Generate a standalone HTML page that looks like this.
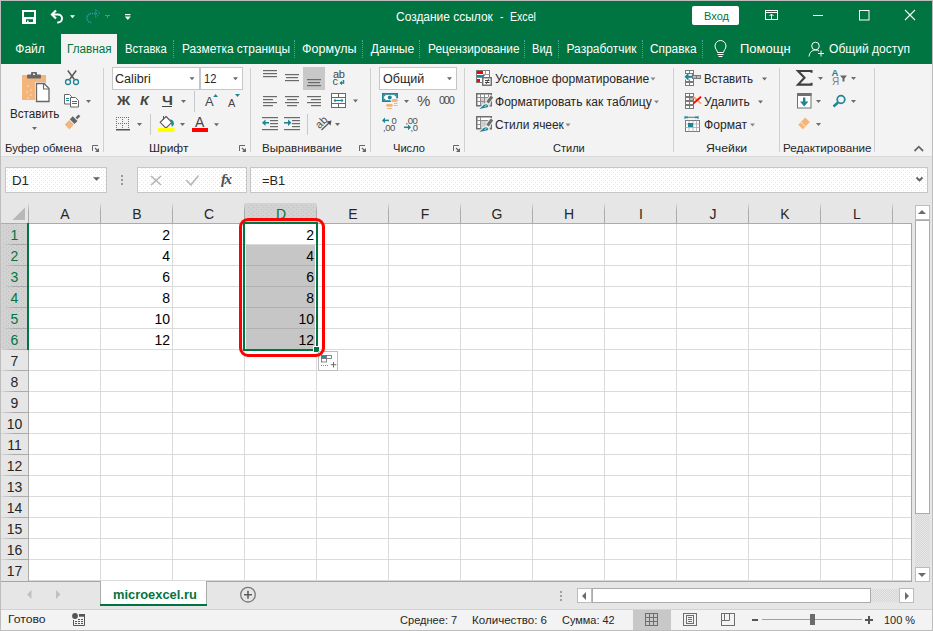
<!DOCTYPE html>
<html><head><meta charset="utf-8">
<style>
*{margin:0;padding:0;box-sizing:border-box}
html,body{width:933px;height:631px;overflow:hidden;background:#e6e6e6}
body{position:relative;font-family:"Liberation Sans",sans-serif;font-size:12px;color:#262626}
.a{position:absolute}
.t{position:absolute;white-space:nowrap;font-size:12px;line-height:16px;font-family:"Liberation Sans",sans-serif}
.w{color:#fff}
svg{position:absolute;overflow:visible}
.dd{position:absolute;width:0;height:0;border-left:3px solid transparent;border-right:3px solid transparent;border-top:3px solid #6b6b6b}
.gsep{position:absolute;top:68px;width:1px;height:84px;background:#c8c8c8}
.glab{position:absolute;top:140px;white-space:nowrap;font-size:12px;line-height:16px;color:#262626}
.tsep{position:absolute;top:40px;height:18px;width:1px;border-left:1px dotted #4f9cc0}
.vl{position:absolute;top:224px;width:1px;height:357px;background:#dadada}
.hl{position:absolute;left:29px;width:882px;height:1px;background:#dadada}
.rh{position:absolute;left:1px;width:27px;height:20px;text-align:center;font-size:14px;line-height:18px;color:#262626}
.ch{position:absolute;top:205px;width:74px;text-align:center;font-size:14px;line-height:18px;color:#262626}
.cv{position:absolute;width:69px;text-align:right;font-size:14px;line-height:18px;color:#000}
</style>

<style id="fit">
#tx1{left:396.20px !important;transform:scaleX(0.9969);transform-origin:0 0}
#tx2{left:499.70px !important;transform:scaleX(0.8500);transform-origin:0 0}
#tx3{left:509.72px !important;transform:scaleX(0.8821);transform-origin:0 0}
#tx4{left:15.30px !important;transform:scaleX(1.0000);transform-origin:0 0}
#tx5{left:67.02px !important;transform:scaleX(0.9795);transform-origin:0 0}
#tx6{left:125.26px !important;transform:scaleX(0.9364);transform-origin:0 0}
#tx8{left:181.51px !important;transform:scaleX(0.9935);transform-origin:0 0}
#tx10{left:302.06px !important;transform:scaleX(1.0431);transform-origin:0 0}
#tx12{left:370.80px !important;transform:scaleX(1.0000);transform-origin:0 0}
#tx14{left:427.71px !important;transform:scaleX(0.9879);transform-origin:0 0}
#tx16{left:532.48px !important;transform:scaleX(0.9238);transform-origin:0 0}
#tx18{left:566.50px !important;transform:scaleX(1.0000);transform-origin:0 0}
#tx20{left:650.11px !important;transform:scaleX(0.9891);transform-origin:0 0}
#tx22{left:740.22px !important;transform:scaleX(1.0822);transform-origin:0 0}
#tx23{left:829.20px !important;transform:scaleX(1.0050);transform-origin:0 0}
#tx24{left:703.74px !important;transform:scaleX(0.9600);transform-origin:0 0}
#tx25{left:10.13px !important;transform:scaleX(0.9714);transform-origin:0 0}
#tx26{left:5.21px !important;transform:scaleX(0.9857);transform-origin:0 0}
#tx27{left:115.45px !important;transform:scaleX(1.0500);transform-origin:0 0}
#tx28{left:203.67px !important;transform:scaleX(0.9333);transform-origin:0 0}
#tx35{left:149.46px !important;transform:scaleX(1.0432);transform-origin:0 0}
#tx39{left:262.19px !important;transform:scaleX(1.0103);transform-origin:0 0}
#tx40{left:382.80px !important;transform:scaleX(1.0462);transform-origin:0 0}
#tx47{left:393.33px !important;transform:scaleX(0.9656);transform-origin:0 0}
#tx48{left:494.79px !important;transform:scaleX(1.0099);transform-origin:0 0}
#tx49{left:495.20px !important;transform:scaleX(1.0039);transform-origin:0 0}
#tx50{left:495.21px !important;transform:scaleX(0.9941);transform-origin:0 0}
#tx51{left:553.44px !important;transform:scaleX(0.9594);transform-origin:0 0}
#tx52{left:704.44px !important;transform:scaleX(0.9633);transform-origin:0 0}
#tx53{left:703.60px !important;transform:scaleX(0.9977);transform-origin:0 0}
#tx54{left:704.39px !important;transform:scaleX(1.0095);transform-origin:0 0}
#tx55{left:705.73px !important;transform:scaleX(1.0676);transform-origin:0 0}
#tx58{left:783.39px !important;transform:scaleX(1.0105);transform-origin:0 0}
#tx59{left:12.28px !important;transform:scaleX(1.0200);transform-origin:0 0}
#tx61{left:262.11px !important;transform:scaleX(0.9864);transform-origin:0 0}
#tx62{left:112.55px !important;transform:scaleX(0.9547);transform-origin:0 0}
#tx63{left:8.14px !important;transform:scaleX(1.0588);transform-origin:0 0}
#tx64{left:399.54px !important;transform:scaleX(0.9621);transform-origin:0 0}
#tx65{left:472.39px !important;transform:scaleX(1.0068);transform-origin:0 0}
#tx66{left:562.45px !important;transform:scaleX(0.9519);transform-origin:0 0}
#tx67{left:884.05px !important;transform:scaleX(0.9548);transform-origin:0 0}
</style>
</head><body>
<svg width="0" height="0" style="position:absolute"><defs>
<pattern id="dots" width="4" height="4" patternUnits="userSpaceOnUse"><rect x="1" y="0" width="1" height="1" fill="#e6e6e6"/><rect x="3" y="2" width="1" height="1" fill="#e6e6e6"/></pattern>
<pattern id="hdots" width="5" height="4" patternUnits="userSpaceOnUse"><rect x="1" y="1" width="1" height="1" fill="#c2c2c2"/><rect x="3" y="3" width="1" height="1" fill="#c2c2c2"/></pattern>
</defs></svg>
<!-- window border -->
<div class="a" style="left:0;top:0;width:933px;height:631px;border:1px solid #bdbdbd;z-index:50;pointer-events:none"></div>

<!-- title bar + tabs -->
<div class="a" style="left:1px;top:1px;width:931px;height:63px;background:#017541"></div>
<div id="tx1" class="t w" style="left:396px;top:9px">Создание ссылок</div>
<div id="tx2" class="t w" style="left:498px;top:9px">-</div>
<div id="tx3" class="t w" style="left:509px;top:9px">Excel</div>

<!-- tabs -->
<div class="a" style="left:61px;top:34px;width:56px;height:30px;background:#f3f3f3"></div>
<div id="tx4" class="t w" style="left:15px;top:41px">Файл</div>
<div id="tx5" class="t" style="left:67px;top:41px;color:#017541">Главная</div>
<div id="tx6" class="t w" style="left:125px;top:41px">Вставка</div>
<div id="tx7" class="tsep" style="left:173px"></div>
<div id="tx8" class="t w" style="left:181px;top:41px">Разметка страницы</div>
<div id="tx9" class="tsep" style="left:294px"></div>
<div id="tx10" class="t w" style="left:302px;top:41px">Формулы</div>
<div id="tx11" class="tsep" style="left:362px"></div>
<div id="tx12" class="t w" style="left:370px;top:41px">Данные</div>
<div id="tx13" class="tsep" style="left:419px"></div>
<div id="tx14" class="t w" style="left:427px;top:41px">Рецензирование</div>
<div id="tx15" class="tsep" style="left:524px"></div>
<div id="tx16" class="t w" style="left:532px;top:41px">Вид</div>
<div id="tx17" class="tsep" style="left:558px"></div>
<div id="tx18" class="t w" style="left:566px;top:41px">Разработчик</div>
<div id="tx19" class="tsep" style="left:642px"></div>
<div id="tx20" class="t w" style="left:650px;top:41px">Справка</div>
<div id="tx21" class="tsep" style="left:702px"></div>
<div id="tx22" class="t w" style="left:740px;top:41px">Помощн</div>
<div id="tx23" class="t w" style="left:828px;top:41px">Общий доступ</div>

<!-- ribbon -->
<div class="a" style="left:1px;top:64px;width:931px;height:93px;background:#f3f3f3;border-bottom:1px solid #dadada"></div>
<div id="ribbon">
<div class="a" style="left:692px;top:6px;width:47px;height:19px;background:#fff;border-radius:2px"></div>
<div id="tx24" class="t" style="left:704px;top:8px;color:#017541;font-size:11.5px">Вход</div>
<div id="tx25" class="t" style="left:10px;top:106px;">Вставить</div>
<div class="a" style="left:103px;top:68px;width:1px;height:84px;background:#d0d0d0"></div>
<div id="tx26" class="t" style="left:5px;top:140px;font-size:11.5px">Буфер обмена</div>
<div class="a" style="left:112px;top:67px;width:131px;height:23px;background:#fff;border:1px solid #c6c6c6"></div>
<div class="a" style="left:199px;top:67px;width:2px;height:23px;background:#c6c6c6"></div>
<div id="tx27" class="t" style="left:115px;top:71px;">Calibri</div>
<div id="tx28" class="t" style="left:203px;top:71px;">12</div>
<div id="tx29" class="t" style="left:116.5px;top:93px;font-size:13px;font-weight:bold;color:#454545;transform:scaleX(1.12);transform-origin:0 0">Ж</div>
<div id="tx30" class="t" style="left:139.5px;top:93px;font-size:13px;font-weight:bold;font-style:italic;color:#454545;transform:scaleX(1.1);transform-origin:0 0">К</div>
<div id="tx31" class="t" style="left:161.5px;top:93px;font-size:13px;font-weight:bold;color:#454545;transform:scaleX(1.2);transform-origin:0 0">Ч</div>
<div class="a" style="left:194px;top:91px;width:1px;height:21px;background:#c8c8c8"></div>
<div id="tx32" class="t" style="left:205px;top:94px;font-size:13px;color:#454545">A</div>
<div id="tx33" class="t" style="left:228px;top:95px;font-size:11px;color:#454545">A</div>
<div class="a" style="left:150px;top:114px;width:1px;height:21px;background:#c8c8c8"></div>
<div id="tx34" class="t" style="left:195px;top:114px;font-size:14px;color:#454545">A</div>
<div class="a" style="left:250px;top:68px;width:1px;height:84px;background:#d0d0d0"></div>
<div id="tx35" class="t" style="left:150px;top:140px;font-size:11.5px">Шрифт</div>
<div id="tx36" class="t" style="left:333px;top:69px;font-size:11px;line-height:10px;color:#454545;letter-spacing:-0.3px">ab</div>
<div id="tx37" class="t" style="left:332.5px;top:76px;font-size:11px;line-height:10px;color:#505050">c</div>
<div class="a" style="left:307px;top:114px;width:1px;height:21px;background:#c8c8c8"></div>
<div id="tx38" class="t" style="left:315px;top:117px;font-size:11px;line-height:10px;color:#505050;transform:rotate(-45deg);transform-origin:50% 50%">ab</div>
<div class="a" style="left:370px;top:68px;width:1px;height:84px;background:#d0d0d0"></div>
<div id="tx39" class="t" style="left:262px;top:140px;font-size:11.5px">Выравнивание</div>
<div class="a" style="left:379px;top:67px;width:78px;height:23px;background:#fff;border:1px solid #c6c6c6"></div>
<div id="tx40" class="t" style="left:382px;top:71px;">Общий</div>
<div id="tx41" class="t" style="left:417px;top:93px;font-size:15px;color:#505050">%</div>
<div id="tx42" class="t" style="left:439px;top:92px;font-size:11px;color:#484848;letter-spacing:-1.3px">000</div>
<div id="tx43" class="t" style="left:391.5px;top:112.7px;font-size:9.5px;color:#505050">0</div>
<div id="tx44" class="t" style="left:383px;top:120px;font-size:9.5px;color:#505050;letter-spacing:-0.4px">,00</div>
<div id="tx45" class="t" style="left:405.5px;top:112.7px;font-size:9.5px;color:#505050;letter-spacing:-0.4px">,00</div>
<div id="tx46" class="t" style="left:410.5px;top:120px;font-size:9.5px;color:#505050;letter-spacing:-0.4px">,0</div>
<div class="a" style="left:464px;top:68px;width:1px;height:84px;background:#d0d0d0"></div>
<div id="tx47" class="t" style="left:393px;top:140px;font-size:11.5px">Число</div>
<div id="tx48" class="t" style="left:495px;top:71px;">Условное форматирование</div>
<div id="tx49" class="t" style="left:495px;top:94px;">Форматировать как таблицу</div>
<div id="tx50" class="t" style="left:495px;top:117px;">Стили ячеек</div>
<div class="a" style="left:673px;top:68px;width:1px;height:84px;background:#d0d0d0"></div>
<div id="tx51" class="t" style="left:553px;top:140px;font-size:11.5px">Стили</div>
<div id="tx52" class="t" style="left:704px;top:71px;">Вставить</div>
<div id="tx53" class="t" style="left:704px;top:94px;">Удалить</div>
<div id="tx54" class="t" style="left:704px;top:117px;">Формат</div>
<div class="a" style="left:779px;top:68px;width:1px;height:84px;background:#d0d0d0"></div>
<div id="tx55" class="t" style="left:706px;top:140px;font-size:11.5px">Ячейки</div>
<div id="tx56" class="t" style="left:831.5px;top:68px;font-size:9.5px;line-height:10px;color:#1e8596;font-weight:bold">A</div>
<div id="tx57" class="t" style="left:832px;top:77px;font-size:10px;line-height:10px;color:#808080">Я</div>
<div class="a" style="left:874px;top:68px;width:1px;height:84px;background:#d0d0d0"></div>
<div id="tx58" class="t" style="left:783px;top:140px;font-size:11.5px">Редактирование</div>
<svg class="a" style="left:0;top:0" width="933" height="631"><path d="M23 11h12v12h-12z" fill="none" stroke="#fff" stroke-width="2"/><rect x="22" y="17" width="14" height="2.2" fill="#fff"/><rect x="24" y="19" width="2" height="4" fill="#fff"/><rect x="33" y="19" width="2" height="4" fill="#fff"/><rect x="27" y="20.5" width="1.6" height="2" fill="#fff"/><path d="M52.5 14.5h5.5a4 4 0 0 1 0 8h-0.8" fill="none" stroke="#fff" stroke-width="2"/><path d="M56 10.5l-4 4 4 4" fill="none" stroke="#fff" stroke-width="2.2"/><polygon points="70,15.3 75,15.3 72.5,18.3" fill="#fff"/><path d="M97 13.5h-5.5a4.5 4.5 0 0 0 0 9h0.5" fill="none" stroke="#3a98b4" stroke-width="1.6" stroke-dasharray="1 1"/><path d="M100 13.5l-4.5-4v8z" fill="none" stroke="#3a98b4" stroke-width="1" stroke-dasharray="1 1"/><path d="M105 15.5h5M107.5 15.5v2.5" stroke="#3a98b4" stroke-width="1"/><rect x="125" y="14" width="5.5" height="1.2" fill="#fff"/><polygon points="124.8,16.6 130.8,16.6 127.8,20" fill="#fff"/><rect x="765.5" y="10.5" width="12" height="9" fill="none" stroke="#fff"/><path d="M765.5 12.5h12M771.5 14v5.5" stroke="#fff"/><path d="M769.5 16l2-2 2 2" fill="none" stroke="#fff"/><path d="M813 15.5h10" stroke="#fff"/><rect x="859.5" y="10.5" width="9.5" height="9.5" fill="none" stroke="#fff"/><path d="M905 10l10 10M915 10l-10 10" stroke="#fff" stroke-width="1.1"/><path d="M717.5 52.5c0-2-2.5-3.5-2.5-6.5a5.5 5.5 0 0 1 11 0c0 3-2.5 4.5-2.5 6.5z" fill="none" stroke="#fff" stroke-width="1"/><path d="M717.5 54.5h6M718.5 56.5h4" stroke="#fff"/><circle cx="815.5" cy="46" r="3.8" fill="none" stroke="#fff"/><path d="M809 56.5c0.5-4 3-6.5 6.5-6.5 1.5 0 2.5 0.4 3.5 1" fill="none" stroke="#fff"/><path d="M818 53.5h6M821 50.5v6" stroke="#fff"/><path d="M22 75h5v3h14v-3h5v25h-24z" fill="#f4b57a"/><rect x="27" y="74.5" width="14" height="4" rx="1" fill="#666"/><rect x="31" y="72" width="6" height="4" rx="1" fill="#666"/><rect x="33" y="73.5" width="2" height="1.5" fill="#eee"/><path d="M35 82h9l6 6v14.5h-15z" fill="#f3f3f3"/><path d="M36.5 83.5h7.5l5 5v13h-12.5z" fill="#fff" stroke="#666" stroke-width="1.3"/><path d="M43.5 83.5v5.5h5.5" fill="none" stroke="#666" stroke-width="1.1"/><rect x="27.5" y="85.5" width="1.2" height="1.2" fill="#fde7d3"/><rect x="30.5" y="89.5" width="1.2" height="1.2" fill="#fde7d3"/><rect x="26.5" y="91.5" width="1.2" height="1.2" fill="#fde7d3"/><rect x="30.5" y="94.5" width="1.2" height="1.2" fill="#fde7d3"/><rect x="27.5" y="97.5" width="1.2" height="1.2" fill="#fde7d3"/><polygon points="32,127 37,127 34.5,130" fill="#6b6b6b"/><path d="M67.8 70.5L74.2 79.3M76.2 70.5L69.8 79.3" stroke="#5a5a5a" stroke-width="1.5"/><circle cx="68" cy="82" r="2.5" fill="none" stroke="#1e8596" stroke-width="1.3"/><circle cx="76" cy="82" r="2.5" fill="none" stroke="#1e8596" stroke-width="1.3"/><path d="M64.5 94.5h5l2 2v7.5h-7z" fill="#fff" stroke="#666"/><path d="M70.5 97.5h5l3 3v6.5h-8z" fill="#fff" stroke="#666"/><path d="M66 98.5h3M66 100.5h3M72 101.5h5M72 103.5h5" stroke="#1e8596" stroke-width="1"/><polygon points="86,100 91,100 88.5,103" fill="#6b6b6b"/><path d="M64.8 124.5l4.5-4.5 4.5 4.5-4.5 5z" fill="#f4b57a"/><path d="M69.8 119.3l3-3 4.7 4.7-3 3z" fill="#666"/><path d="M75.5 117.5l3-3 1.8 1.8-3 3z" fill="#666"/><path d="M92.5 151V145.5H98" fill="none" stroke="#666"/><path d="M95 148l3 3" stroke="#666" stroke-width="1.2"/><polygon points="95,152 99,152 99,148" fill="#666"/><polygon points="189.5,77.2 194.5,77.2 192.0,80.2" fill="#6b6b6b"/><polygon points="233,77.2 238,77.2 235.5,80.2" fill="#6b6b6b"/><rect x="162" y="106" width="10" height="1" fill="#454545"/><polygon points="181,100 186,100 183.5,103" fill="#6b6b6b"/><polygon points="213.2,97 218,97 215.6,94" fill="#1e8596"/><polygon points="235,94 240,94 237.5,97" fill="#1e8596"/><path d="M116 117.5h14M116 123.5h14M116.5 117v12M122.5 117v12M128.5 117v12" stroke="#707070" stroke-width="1" stroke-dasharray="1 1"/><rect x="116" y="129" width="14" height="1.5" fill="#555"/><polygon points="137,123 142,123 139.5,126" fill="#6b6b6b"/><path d="M166 116.5l5.8 5.8-5.8 5.8-5.8-5.8z" fill="#fff" stroke="#555" stroke-width="1.1"/><path d="M163.5 116v4" stroke="#555"/><path d="M170.3 119.5c2.6 0 4 2.6 3.4 5.2l-1.8 2.3z" fill="#1e8596"/><rect x="158" y="128" width="16.5" height="4" fill="#ffff00"/><polygon points="180,123 185,123 182.5,126" fill="#6b6b6b"/><rect x="192" y="128" width="16" height="4" fill="#ff0000"/><polygon points="214,123.2 219,123.2 216.5,126.2" fill="#6b6b6b"/><path d="M239.5 151V145.5H245" fill="none" stroke="#666"/><path d="M242 148l3 3" stroke="#666" stroke-width="1.2"/><polygon points="242,152 246,152 246,148" fill="#666"/><rect x="303" y="67" width="22" height="23" fill="#c8c8c8"/><rect x="263" y="70" width="14" height="1.2" fill="#6a6a6a"/><rect x="263" y="73" width="14" height="1.2" fill="#6a6a6a"/><rect x="263" y="76" width="14" height="1.2" fill="#6a6a6a"/><rect x="285.0" y="74" width="14" height="1.2" fill="#6a6a6a"/><rect x="286.0" y="77" width="12" height="1.2" fill="#6a6a6a"/><rect x="285.0" y="80" width="14" height="1.2" fill="#6a6a6a"/><rect x="307.0" y="79" width="14" height="1.2" fill="#6a6a6a"/><rect x="308.0" y="82" width="12" height="1.2" fill="#6a6a6a"/><rect x="307.0" y="85" width="14" height="1.2" fill="#6a6a6a"/><path d="M343.5 80v3h-3" fill="none" stroke="#1e8596" stroke-width="1.5"/><polygon points="339.5,83 342,80.8 342,85.2" fill="#1e8596"/><rect x="263" y="96" width="14" height="1.2" fill="#6a6a6a"/><rect x="263" y="99" width="10" height="1.2" fill="#6a6a6a"/><rect x="263" y="102" width="14" height="1.2" fill="#6a6a6a"/><rect x="263" y="105" width="10" height="1.2" fill="#6a6a6a"/><rect x="285.0" y="96" width="14" height="1.2" fill="#6a6a6a"/><rect x="287.0" y="99" width="10" height="1.2" fill="#6a6a6a"/><rect x="285.0" y="102" width="14" height="1.2" fill="#6a6a6a"/><rect x="287.0" y="105" width="10" height="1.2" fill="#6a6a6a"/><rect x="307" y="96" width="14" height="1.2" fill="#6a6a6a"/><rect x="311" y="99" width="10" height="1.2" fill="#6a6a6a"/><rect x="307" y="102" width="14" height="1.2" fill="#6a6a6a"/><rect x="311" y="105" width="10" height="1.2" fill="#6a6a6a"/><rect x="331.5" y="93.5" width="14" height="14" fill="#fff" stroke="#6a6a6a"/><path d="M331.5 97.5h14M331.5 103.5h14M338.5 93.5v4M338.5 103.5v4" stroke="#6a6a6a"/><path d="M334 100.5h9" stroke="#1e8596" stroke-width="1.2"/><polygon points="333.5,100.5 335.5,98.5 335.5,102.5" fill="#1e8596"/><polygon points="343.5,100.5 341.5,98.5 341.5,102.5" fill="#1e8596"/><polygon points="353,99.5 358,99.5 355.5,102.5" fill="#6b6b6b"/><rect x="262" y="117" width="16" height="1.2" fill="#6a6a6a"/><rect x="262" y="129" width="16" height="1.2" fill="#6a6a6a"/><rect x="270" y="120" width="8" height="1.2" fill="#6a6a6a"/><rect x="270" y="123" width="8" height="1.2" fill="#6a6a6a"/><rect x="270" y="126" width="8" height="1.2" fill="#6a6a6a"/><path d="M263 122.8h6" stroke="#1e8596" stroke-width="1.6"/><polygon points="262,122.8 265.5,119.5 265.5,126" fill="#1e8596"/><rect x="284" y="117" width="16" height="1.2" fill="#6a6a6a"/><rect x="284" y="129" width="16" height="1.2" fill="#6a6a6a"/><rect x="292" y="120" width="8" height="1.2" fill="#6a6a6a"/><rect x="292" y="123" width="8" height="1.2" fill="#6a6a6a"/><rect x="292" y="126" width="8" height="1.2" fill="#6a6a6a"/><path d="M284 122.8h6" stroke="#1e8596" stroke-width="1.6"/><polygon points="291.5,122.8 288,119.5 288,126" fill="#1e8596"/><path d="M321.5 130l9-8.5" stroke="#505050" stroke-width="1.1"/><polygon points="331.5,120.5 326.5,121.5 330.5,125.5" fill="#505050"/><polygon points="335,123 340,123 337.5,126" fill="#6b6b6b"/><path d="M359.5 151V145.5H365" fill="none" stroke="#666"/><path d="M362 148l3 3" stroke="#666" stroke-width="1.2"/><polygon points="362,152 366,152 366,148" fill="#666"/><polygon points="447,77.2 452,77.2 449.5,80.2" fill="#6b6b6b"/><rect x="382.9" y="93.9" width="14.2" height="7.2" fill="#fff" stroke="#1e8596" stroke-width="1.8"/><polygon points="384,95 385.8,95 384,96.8" fill="#1e8596"/><polygon points="396,95 394.2,95 396,96.8" fill="#1e8596"/><polygon points="384,100 385.8,100 384,98.2" fill="#1e8596"/><circle cx="389.8" cy="97.4" r="2" fill="#1e8596"/><polygon points="390.3,100.5 391.8,98.3 397.8,98.3 399,100.5 397.8,102.8 391.8,102.8" fill="#f3f3f3"/><polygon points="391.3,100.5 392.5,99 397,99 398,100.5 397,102 392.5,102" fill="#f4b57a"/><rect x="394" y="103" width="3.5" height="1" fill="#f4b57a"/><rect x="394" y="105" width="3.5" height="1" fill="#f4b57a"/><polygon points="385.8,105.4 387,104 392,104 393,105.4 392,106.8 387,106.8" fill="#f4b57a"/><rect x="387" y="108" width="5" height="1" fill="#f4b57a"/><polygon points="404,100 409,100 406.5,103" fill="#6b6b6b"/><path d="M383 120.4h6" stroke="#1e8596" stroke-width="1.5"/><polygon points="382,120.4 385,117.5 385,123.3" fill="#1e8596"/><path d="M404 127.3h6" stroke="#1e8596" stroke-width="1.5"/><polygon points="411,127.3 408,124.4 408,130.2" fill="#1e8596"/><path d="M453.5 151V145.5H459" fill="none" stroke="#666"/><path d="M456 148l3 3" stroke="#666" stroke-width="1.2"/><polygon points="456,152 460,152 460,148" fill="#666"/><rect x="476.5" y="70.5" width="13" height="12" fill="#fff" stroke="#7a7a7a"/><rect x="477" y="71" width="6" height="3" fill="#ff0000"/><path d="M485.5 70.5v4M483 74.5h6.5" stroke="#9a9a9a"/><polygon points="477,75 485,75 483,77.8 477,77.8" fill="#1e8596"/><rect x="477" y="79" width="3" height="3" fill="#ff0000"/><rect x="482.75" y="77.75" width="8.5" height="7.5" fill="#fff" stroke="#6a6a6a" stroke-width="1.4"/><path d="M485 80.5h4.5M485 82.5h4.5" stroke="#444" stroke-width="1"/><path d="M486 84.2L488.6 79" stroke="#444" stroke-width="0.9"/><polygon points="650.5,77.5 655.5,77.5 653.0,80.5" fill="#888"/><rect x="476.75" y="93.75" width="14.5" height="12" fill="#fff" stroke="#6e6e6e" stroke-width="1.5"/><rect x="480.5" y="97.5" width="10" height="7.5" fill="#d0d0d0"/><path d="M480.5 94v11.5M484.5 94v11.5M488.5 94v11.5M477 97.5h14M477 101.5h14" stroke="#8c8c8c" stroke-width="1"/><path d="M492.5 96L487 103" stroke="#f3f3f3" stroke-width="5"/><path d="M492 96.5L487.5 102.5" stroke="#6e6e6e" stroke-width="3"/><polygon points="479,109.5 483.5,104.5 486.5,103.8 489,105.5 487.8,107.5" fill="#f3f3f3" stroke="#f3f3f3" stroke-width="1.5"/><polygon points="479.5,109 483.8,104.8 486.5,104.2 488.5,105.7 487.5,107.3" fill="#1e8596"/><path d="M484.5 106.5l2-1" stroke="#fff" stroke-width="0.8"/><polygon points="654,100.5 659,100.5 656.5,103.5" fill="#888"/><rect x="476.75" y="116.75" width="14.5" height="12" fill="#fff" stroke="#6e6e6e" stroke-width="1.5"/><rect x="480.5" y="120.5" width="10" height="7.5" fill="#d0d0d0"/><path d="M480.5 117v11.5M477 120.5h14M477 124.5h3.5" stroke="#8c8c8c" stroke-width="1"/><rect x="484.5" y="123.5" width="1.2" height="1.2" fill="#3ac0d8"/><path d="M492.5 119L487 126" stroke="#f3f3f3" stroke-width="5"/><path d="M492 119.5L487.5 125.5" stroke="#6e6e6e" stroke-width="3"/><polygon points="479,132.5 483.5,127.5 486.5,126.8 489,128.5 487.8,130.5" fill="#f3f3f3" stroke="#f3f3f3" stroke-width="1.5"/><polygon points="479.5,132 483.8,127.8 486.5,127.2 488.5,128.7 487.5,130.3" fill="#1e8596"/><path d="M484.5 129.5l2-1" stroke="#fff" stroke-width="0.8"/><polygon points="565.5,123.5 570.5,123.5 568.0,126.5" fill="#888"/><rect x="685.5" y="70.5" width="4" height="3" fill="#fff" stroke="#7a7a7a"/><rect x="689.5" y="70.5" width="4" height="3" fill="#fff" stroke="#7a7a7a"/><rect x="685.5" y="74.5" width="4" height="3" fill="#fff" stroke="#7a7a7a"/><rect x="689.5" y="74.5" width="4" height="3" fill="#fff" stroke="#7a7a7a"/><rect x="685.5" y="78.5" width="4" height="3" fill="#fff" stroke="#7a7a7a"/><rect x="689.5" y="78.5" width="4" height="3" fill="#fff" stroke="#7a7a7a"/><rect x="685.5" y="82.5" width="4" height="3" fill="#fff" stroke="#7a7a7a"/><rect x="689.5" y="82.5" width="4" height="3" fill="#fff" stroke="#7a7a7a"/><rect x="692.5" y="75.5" width="4" height="3" fill="#bbb" stroke="#7a7a7a"/><rect x="696.5" y="75.5" width="4" height="3" fill="#bbb" stroke="#7a7a7a"/><rect x="685" y="74" width="7" height="5.5" fill="#f3f3f3"/><path d="M686.5 76.8h6" stroke="#1e8596" stroke-width="2"/><polygon points="684.5,76.8 688.5,72.8 688.5,80.8" fill="#1e8596"/><polygon points="762,77.5 767,77.5 764.5,80.5" fill="#6b6b6b"/><rect x="685.5" y="93.5" width="4" height="3" fill="#fff" stroke="#7a7a7a"/><rect x="689.5" y="93.5" width="4" height="3" fill="#fff" stroke="#7a7a7a"/><rect x="685.5" y="97.5" width="4" height="3" fill="#fff" stroke="#7a7a7a"/><rect x="689.5" y="97.5" width="4" height="3" fill="#fff" stroke="#7a7a7a"/><rect x="685.5" y="101.5" width="4" height="3" fill="#fff" stroke="#7a7a7a"/><rect x="689.5" y="101.5" width="4" height="3" fill="#fff" stroke="#7a7a7a"/><rect x="685.5" y="105.5" width="4" height="3" fill="#fff" stroke="#7a7a7a"/><rect x="689.5" y="105.5" width="4" height="3" fill="#fff" stroke="#7a7a7a"/><rect x="689.5" y="97.5" width="4" height="3" fill="#bbb" stroke="#7a7a7a"/><path d="M693.5 96.8l7.5 6.8" stroke="#f7a35c" stroke-width="1.8"/><path d="M701 96.8l-7.8 6.8" stroke="#ff0000" stroke-width="1.8"/><polygon points="758,100.5 763,100.5 760.5,103.5" fill="#6b6b6b"/><path d="M685 117.3h13M685 116v3M698 116v3" stroke="#1e8596" stroke-width="1.1"/><polygon points="685.5,117.3 687.5,115.8 687.5,118.8" fill="#1e8596"/><polygon points="697.5,117.3 695.5,115.8 695.5,118.8" fill="#1e8596"/><rect x="685.5" y="120.5" width="14" height="11" fill="#fff" stroke="#7a7a7a"/><path d="M685.5 124h14M685.5 127.5h14M689 120.5v11M693 120.5v11M696.5 120.5v11" stroke="#aaa" stroke-width="0.8"/><rect x="688" y="123" width="5" height="4" fill="#1e8596"/><polygon points="750,123.5 755,123.5 752.5,126.5" fill="#888"/><path d="M811.5 72.8v-1.8h-13.5l6.5 6.8-6.5 6.8h13.5v-1.8" fill="none" stroke="#404040" stroke-width="2.1" stroke-linejoin="miter"/><polygon points="818,77 823,77 820.5,80" fill="#6b6b6b"/><polygon points="840,75.5 847,75.5 844.5,78.5 844.5,81.5 842.5,81.5 842.5,78.5" fill="#666"/><polygon points="851,77 856,77 853.5,80" fill="#6b6b6b"/><rect x="797.5" y="93.5" width="13.5" height="14.5" fill="#fff" stroke="#707070"/><rect x="797" y="93" width="14.5" height="3" fill="#707070"/><path d="M804.2 97.5v6" stroke="#1e8596" stroke-width="2.4"/><polygon points="800,101.5 808.4,101.5 804.2,106.5" fill="#1e8596"/><polygon points="816,100 821,100 818.5,103" fill="#6b6b6b"/><circle cx="841" cy="99.5" r="3.8" fill="none" stroke="#1e8596" stroke-width="1.7"/><path d="M838 102.5l-4.5 4" stroke="#1e8596" stroke-width="2.4"/><polygon points="851,100 856,100 853.5,103" fill="#6b6b6b"/><polygon points="798.2,124.7 805.2,117.5 809.8,122.1 802.8,129.3" fill="#f4b57a"/><path d="M799.8 121.2l5.2 5.2" stroke="#f3f3f3" stroke-width="0.9"/><polygon points="816,123 821,123 818.5,126" fill="#6b6b6b"/><path d="M914.5 151l4.3-4.3 4.3 4.3" fill="none" stroke="#6a6a6a" stroke-width="1.8"/></svg>
</div>

<!-- formula bar -->
<div id="fbar"></div>

<!-- grid -->
<div id="grid">
<div class="a" style="left:1px;top:157px;width:931px;height:46px;background:#e6e6e6"></div>
<div class="a" style="left:5px;top:167px;width:102px;height:26px;background:#fff;border:1px solid #c6c6c6"></div>
<svg style="left:0;top:0" width="933" height="631"><rect x="6" y="168" width="100" height="24" fill="url(#dots)"/></svg>
<div id="tx59" class="t" style="left:12px;top:173px;font-size:13px;color:#262626">D1</div>

<div class="a" style="left:121px;top:175px;width:2px;height:2px;background:#9a9a9a"></div>
<div class="a" style="left:121px;top:179px;width:2px;height:2px;background:#9a9a9a"></div>
<div class="a" style="left:121px;top:183px;width:2px;height:2px;background:#9a9a9a"></div>
<div class="a" style="left:137px;top:167px;width:110px;height:26px;background:#fff;border:1px solid #c6c6c6"></div>
<svg style="left:0;top:0" width="933" height="631"><rect x="138" y="168" width="108" height="24" fill="url(#dots)"/></svg>
<div class="a" style="left:250px;top:167px;width:678px;height:26px;background:#fff;border:1px solid #c6c6c6"></div>
<svg style="left:0;top:0" width="933" height="631"><rect x="251" y="168" width="676" height="24" fill="url(#dots)"/></svg>
<svg style="left:0;top:0" width="933" height="631"><polygon points="93,177.3 100,177.3 96.5,180.8" fill="#606060"/>
<path d="M151 176l10 9M161 176l-10 9" stroke="#b4b4b4" stroke-width="1.5"/>
<path d="M186.3 180l4.5 5 7.7-9.5" fill="none" stroke="#b8b8b8" stroke-width="1.7"/>
<path d="M916.5 177.5l3 3 3-3" fill="none" stroke="#606060" stroke-width="1.8"/></svg>
<div id="tx60" class="t" style="left:221px;top:171px;font-family:'Liberation Serif',serif;font-style:italic;font-weight:bold;font-size:15px;color:#505050;letter-spacing:-1.5px">fx</div>
<div id="tx61" class="t" style="left:261px;top:173px;font-size:13px;color:#262626">=B1</div>
<div class="a" style="left:1px;top:203px;width:911px;height:21px;background:#e6e6e6"></div>
<div class="a" style="left:29px;top:224px;width:882px;height:357px;background:#fff"></div>
<div class="a" style="left:1px;top:224px;width:27px;height:357px;background:#e6e6e6"></div>
<div class="a" style="left:1px;top:224px;width:27px;height:126px;background:#d2d2d2"></div>
<svg style="left:0;top:0" width="933" height="631"><rect x="3" y="225" width="23" height="124" fill="url(#hdots)"/></svg>
<div class="a" style="left:244px;top:203px;width:73px;height:20px;background:#d2d2d2"></div>
<svg style="left:0;top:0" width="933" height="631"><rect x="247" y="205" width="67" height="16" fill="url(#hdots)"/></svg>
<div class="vl" style="left:100px"></div>
<div class="a" style="left:100px;top:203px;width:1px;height:20px;background:linear-gradient(#e0e0e0,#ababab 40%,#ababab)"></div>
<div class="vl" style="left:172px"></div>
<div class="a" style="left:172px;top:203px;width:1px;height:20px;background:linear-gradient(#e0e0e0,#ababab 40%,#ababab)"></div>
<div class="vl" style="left:244px"></div>
<div class="a" style="left:244px;top:203px;width:1px;height:20px;background:linear-gradient(#e0e0e0,#ababab 40%,#ababab)"></div>
<div class="vl" style="left:316px"></div>
<div class="a" style="left:316px;top:203px;width:1px;height:20px;background:linear-gradient(#e0e0e0,#ababab 40%,#ababab)"></div>
<div class="vl" style="left:388px"></div>
<div class="a" style="left:388px;top:203px;width:1px;height:20px;background:linear-gradient(#e0e0e0,#ababab 40%,#ababab)"></div>
<div class="vl" style="left:460px"></div>
<div class="a" style="left:460px;top:203px;width:1px;height:20px;background:linear-gradient(#e0e0e0,#ababab 40%,#ababab)"></div>
<div class="vl" style="left:532px"></div>
<div class="a" style="left:532px;top:203px;width:1px;height:20px;background:linear-gradient(#e0e0e0,#ababab 40%,#ababab)"></div>
<div class="vl" style="left:604px"></div>
<div class="a" style="left:604px;top:203px;width:1px;height:20px;background:linear-gradient(#e0e0e0,#ababab 40%,#ababab)"></div>
<div class="vl" style="left:676px"></div>
<div class="a" style="left:676px;top:203px;width:1px;height:20px;background:linear-gradient(#e0e0e0,#ababab 40%,#ababab)"></div>
<div class="vl" style="left:748px"></div>
<div class="a" style="left:748px;top:203px;width:1px;height:20px;background:linear-gradient(#e0e0e0,#ababab 40%,#ababab)"></div>
<div class="vl" style="left:820px"></div>
<div class="a" style="left:820px;top:203px;width:1px;height:20px;background:linear-gradient(#e0e0e0,#ababab 40%,#ababab)"></div>
<div class="vl" style="left:892px"></div>
<div class="a" style="left:892px;top:203px;width:1px;height:20px;background:linear-gradient(#e0e0e0,#ababab 40%,#ababab)"></div>
<div class="hl" style="top:244px"></div>
<div class="a" style="left:1px;top:244px;width:27px;height:1px;background:linear-gradient(90deg,#d8d8d8,#ababab 50%,#ababab)"></div>
<div class="hl" style="top:265px"></div>
<div class="a" style="left:1px;top:265px;width:27px;height:1px;background:linear-gradient(90deg,#d8d8d8,#ababab 50%,#ababab)"></div>
<div class="hl" style="top:286px"></div>
<div class="a" style="left:1px;top:286px;width:27px;height:1px;background:linear-gradient(90deg,#d8d8d8,#ababab 50%,#ababab)"></div>
<div class="hl" style="top:307px"></div>
<div class="a" style="left:1px;top:307px;width:27px;height:1px;background:linear-gradient(90deg,#d8d8d8,#ababab 50%,#ababab)"></div>
<div class="hl" style="top:328px"></div>
<div class="a" style="left:1px;top:328px;width:27px;height:1px;background:linear-gradient(90deg,#d8d8d8,#ababab 50%,#ababab)"></div>
<div class="hl" style="top:349px"></div>
<div class="a" style="left:1px;top:349px;width:27px;height:1px;background:linear-gradient(90deg,#d8d8d8,#ababab 50%,#ababab)"></div>
<div class="hl" style="top:370px"></div>
<div class="a" style="left:1px;top:370px;width:27px;height:1px;background:linear-gradient(90deg,#d8d8d8,#ababab 50%,#ababab)"></div>
<div class="hl" style="top:391px"></div>
<div class="a" style="left:1px;top:391px;width:27px;height:1px;background:linear-gradient(90deg,#d8d8d8,#ababab 50%,#ababab)"></div>
<div class="hl" style="top:412px"></div>
<div class="a" style="left:1px;top:412px;width:27px;height:1px;background:linear-gradient(90deg,#d8d8d8,#ababab 50%,#ababab)"></div>
<div class="hl" style="top:433px"></div>
<div class="a" style="left:1px;top:433px;width:27px;height:1px;background:linear-gradient(90deg,#d8d8d8,#ababab 50%,#ababab)"></div>
<div class="hl" style="top:454px"></div>
<div class="a" style="left:1px;top:454px;width:27px;height:1px;background:linear-gradient(90deg,#d8d8d8,#ababab 50%,#ababab)"></div>
<div class="hl" style="top:475px"></div>
<div class="a" style="left:1px;top:475px;width:27px;height:1px;background:linear-gradient(90deg,#d8d8d8,#ababab 50%,#ababab)"></div>
<div class="hl" style="top:496px"></div>
<div class="a" style="left:1px;top:496px;width:27px;height:1px;background:linear-gradient(90deg,#d8d8d8,#ababab 50%,#ababab)"></div>
<div class="hl" style="top:517px"></div>
<div class="a" style="left:1px;top:517px;width:27px;height:1px;background:linear-gradient(90deg,#d8d8d8,#ababab 50%,#ababab)"></div>
<div class="hl" style="top:538px"></div>
<div class="a" style="left:1px;top:538px;width:27px;height:1px;background:linear-gradient(90deg,#d8d8d8,#ababab 50%,#ababab)"></div>
<div class="hl" style="top:559px"></div>
<div class="hl" style="top:580px"></div>
<div class="a" style="left:1px;top:559px;width:27px;height:1px;background:linear-gradient(90deg,#d8d8d8,#ababab 50%,#ababab)"></div>
<div class="a" style="left:1px;top:223px;width:911px;height:1px;background:#ababab"></div>
<div class="a" style="left:28px;top:203px;width:1px;height:20px;background:linear-gradient(#e0e0e0,#ababab 40%,#ababab)"></div><div class="a" style="left:28px;top:223px;width:1px;height:358px;background:#ababab"></div>
<div class="a" style="left:911px;top:223px;width:1px;height:359px;background:#a6a6a6"></div>
<div class="a" style="left:1px;top:581px;width:911px;height:1px;background:#a6a6a6"></div>
<svg style="left:0;top:0" width="933" height="631"><polygon points="12.5,220 25,220 25,207.5" fill="#b8b8b8"/></svg>
<div class="ch" style="left:28px;color:#262626">A</div>
<div class="ch" style="left:100px;color:#262626">B</div>
<div class="ch" style="left:172px;color:#262626">C</div>
<div class="ch" style="left:244px;color:#017541">D</div>
<div class="ch" style="left:316px;color:#262626">E</div>
<div class="ch" style="left:388px;color:#262626">F</div>
<div class="ch" style="left:460px;color:#262626">G</div>
<div class="ch" style="left:532px;color:#262626">H</div>
<div class="ch" style="left:604px;color:#262626">I</div>
<div class="ch" style="left:676px;color:#262626">J</div>
<div class="ch" style="left:748px;color:#262626">K</div>
<div class="ch" style="left:820px;color:#262626">L</div>
<div class="rh" style="top:226px;color:#017541">1</div>
<div class="rh" style="top:247px;color:#017541">2</div>
<div class="rh" style="top:268px;color:#017541">3</div>
<div class="rh" style="top:289px;color:#017541">4</div>
<div class="rh" style="top:310px;color:#017541">5</div>
<div class="rh" style="top:331px;color:#017541">6</div>
<div class="rh" style="top:352px;color:#262626">7</div>
<div class="rh" style="top:373px;color:#262626">8</div>
<div class="rh" style="top:394px;color:#262626">9</div>
<div class="rh" style="top:415px;color:#262626">10</div>
<div class="rh" style="top:436px;color:#262626">11</div>
<div class="rh" style="top:457px;color:#262626">12</div>
<div class="rh" style="top:478px;color:#262626">13</div>
<div class="rh" style="top:499px;color:#262626">14</div>
<div class="rh" style="top:520px;color:#262626">15</div>
<div class="rh" style="top:541px;color:#262626">16</div>
<div class="rh" style="top:562px;color:#262626">17</div>
<div class="a" style="left:246px;top:245px;width:69px;height:104px;background:#c6c6c6"></div>
<div class="a" style="left:246px;top:265px;width:69px;height:1px;background:#b0b0b0"></div>
<div class="a" style="left:246px;top:286px;width:69px;height:1px;background:#b0b0b0"></div>
<div class="a" style="left:246px;top:307px;width:69px;height:1px;background:#b0b0b0"></div>
<div class="a" style="left:246px;top:328px;width:69px;height:1px;background:#b0b0b0"></div>
<div class="cv" style="left:101px;top:226px">2</div>
<div class="cv" style="left:245px;top:226px">2</div>
<div class="cv" style="left:101px;top:247px">4</div>
<div class="cv" style="left:245px;top:247px">4</div>
<div class="cv" style="left:101px;top:268px">6</div>
<div class="cv" style="left:245px;top:268px">6</div>
<div class="cv" style="left:101px;top:289px">8</div>
<div class="cv" style="left:245px;top:289px">8</div>
<div class="cv" style="left:101px;top:310px">10</div>
<div class="cv" style="left:245px;top:310px">10</div>
<div class="cv" style="left:101px;top:331px">12</div>
<div class="cv" style="left:245px;top:331px">12</div>
<div class="a" style="left:243px;top:222px;width:75px;height:129px;border:2px solid #017541"></div>
<div class="a" style="left:27px;top:223px;width:2px;height:127px;background:#017541"></div>
<div class="a" style="left:313px;top:346px;width:7px;height:7px;background:#017541;border:1px solid #fff"></div>
<div class="a" style="left:239px;top:218px;width:86px;height:139px;border:3px solid #ff0000;border-radius:9px;z-index:5"></div>
<div class="a" style="left:318px;top:351px;width:20px;height:20px;background:#fff;border:1px solid #bdbdbd"></div>
<svg style="left:0;top:0" width="933" height="631"><rect x="321.5" y="355.5" width="5" height="3" fill="#2c8a9c" stroke="#6a6a6a" stroke-width="0.8"/><rect x="326.5" y="355.5" width="5" height="3" fill="#fff" stroke="#6a6a6a" stroke-width="0.8"/><rect x="321.5" y="358.5" width="5" height="3.5" fill="#fff" stroke="#6a6a6a" stroke-width="0.8"/><path d="M321 365.5h7" stroke="#8a8a8a" stroke-width="1" stroke-dasharray="1 1"/><path d="M333.5 362v5.5M330.8 364.7h5.5" stroke="#6a6a6a" stroke-width="1"/></svg>
</div>

<!-- bottom -->
<div id="bottom">
<div class="a" style="left:913px;top:203px;width:19px;height:379px;background:#e6e6e6"></div>
<div class="a" style="left:915px;top:513px;width:15px;height:54px;background:repeating-conic-gradient(#d6d6d6 0 25%,#e8e8e8 0 50%) 0 0/2px 2px"></div>
<div class="a" style="left:915px;top:205px;width:15px;height:15px;background:#fff;border:1px solid #bcbcbc"></div>
<div class="dd" style="left:918px;top:210px;border-left-width:4px;border-right-width:4px;border-top:0;border-bottom:4px solid #6b6b6b"></div>
<div class="a" style="left:915px;top:220px;width:15px;height:294px;background:#fff;border:1px solid #ababab"></div>
<div class="a" style="left:915px;top:567px;width:15px;height:15px;background:#fff;border:1px solid #bcbcbc"></div>
<div class="dd" style="left:918px;top:573px;border-left-width:4px;border-right-width:4px;border-top-width:4px;border-top-color:#6b6b6b"></div>
<div class="a" style="left:1px;top:582px;width:931px;height:27px;background:#e6e6e6"></div>
<div class="a" style="left:1px;top:609px;width:931px;height:1px;background:#d2d2d2"></div>
<svg style="left:0;top:0" width="933" height="631"><polygon points="31.5,590 31.5,599 27,594.5" fill="#c0c0c0"/><polygon points="56,590 56,599 60.5,594.5" fill="#c0c0c0"/></svg>
<div class="a" style="left:100px;top:581px;width:107px;height:25px;background:#fff;border-left:1px solid #ababab;border-right:1px solid #ababab"></div>
<div class="a" style="left:100px;top:604px;width:107px;height:2px;background:#017541"></div>
<div id="tx62" class="t" style="left:112px;top:587px;font-size:13.5px;font-weight:bold;color:#017541">microexcel.ru</div>
<svg style="left:0;top:0" width="933" height="631"><circle cx="248" cy="594.7" r="7.3" fill="none" stroke="#7a7a7a" stroke-width="1.3"/><path d="M244 594.7h8M248 590.7v8" stroke="#5f5f5f" stroke-width="1.6"/></svg>
<div class="a" style="left:560px;top:591px;width:2px;height:2px;background:#a0a0a0"></div>
<div class="a" style="left:560px;top:595px;width:2px;height:2px;background:#a0a0a0"></div>
<div class="a" style="left:560px;top:599px;width:2px;height:2px;background:#a0a0a0"></div>
<div class="a" style="left:577px;top:588px;width:15px;height:15px;background:#fff;border:1px solid #bcbcbc"></div>
<div class="dd" style="left:582px;top:592px;border-top:4px solid transparent;border-bottom:4px solid transparent;border-left:0;border-right:4px solid #6b6b6b"></div>
<div class="a" style="left:592px;top:588px;width:279px;height:15px;background:#fff;border:1px solid #ababab"></div>
<div class="a" style="left:871px;top:589px;width:28px;height:13px;background:repeating-conic-gradient(#d6d6d6 0 25%,#e8e8e8 0 50%) 0 0/2px 2px"></div>
<div class="a" style="left:899px;top:588px;width:15px;height:15px;background:#fff;border:1px solid #bcbcbc"></div>
<div class="dd" style="left:905px;top:592px;border-top:4px solid transparent;border-bottom:4px solid transparent;border-right:0;border-left:4px solid #6b6b6b"></div>
<div class="a" style="left:1px;top:610px;width:931px;height:20px;background:#f3f3f3"></div>
<div id="tx63" class="t" style="left:8px;top:611px;font-size:11.5px">Готово</div>
<div id="tx64" class="t" style="left:399px;top:612px;font-size:11.5px">Среднее: 7</div>
<div id="tx65" class="t" style="left:472px;top:612px;font-size:11.5px">Количество: 6</div>
<div id="tx66" class="t" style="left:562px;top:612px;font-size:11.5px">Сумма: 42</div>
<div class="a" style="left:633px;top:610px;width:38px;height:20px;background:#c8c8c8"></div>
<div id="tx67" class="t" style="left:884px;top:612px;font-size:11.5px">100 %</div>
<div class="a" style="left:762px;top:619px;width:100px;height:1px;background:#a0a0a0"></div>
<div class="a" style="left:810px;top:614px;width:5px;height:11px;background:#6b6b6b"></div>
<div class="a" style="left:752px;top:619px;width:6px;height:2px;background:#555"></div>
<div class="a" style="left:865px;top:619px;width:8px;height:2px;background:#555"></div>
<div class="a" style="left:868px;top:616px;width:2px;height:8px;background:#555"></div>
<svg style="left:0;top:0" width="933" height="631"><circle cx="75" cy="616" r="2.9" fill="#555"/><rect x="79" y="614" width="6" height="2.7" fill="#555"/><path d="M84.5 614v11.5h-11v-5.5" fill="none" stroke="#555" stroke-width="1"/><rect x="78" y="619" width="2" height="1" fill="#555"/><rect x="81" y="619" width="2" height="1" fill="#555"/><rect x="75" y="621" width="2" height="1" fill="#555"/><rect x="78" y="621" width="2" height="1" fill="#555"/><rect x="81" y="621" width="2" height="1" fill="#555"/><rect x="75" y="623" width="2" height="1" fill="#555"/><rect x="78" y="623" width="2" height="1" fill="#555"/><rect x="81" y="623" width="2" height="1" fill="#555"/><rect x="645.5" y="613.5" width="12" height="12" fill="none" stroke="#6e6e6e"/><path d="M649.5 613.5v12M653.5 613.5v12M645.5 617.5h12M645.5 621.5h12" stroke="#6e6e6e"/><rect x="683.5" y="613.5" width="13" height="12" fill="none" stroke="#6e6e6e"/><rect x="686.5" y="615.5" width="7" height="8" fill="none" stroke="#6e6e6e"/><path d="M688 617.5h4M688 619.5h4M688 621.5h4" stroke="#6e6e6e"/><rect x="721.5" y="613.5" width="13" height="12" fill="none" stroke="#6e6e6e"/><path d="M721.5 620.5H729.5V613.5M724.5 613.5V620.5" fill="none" stroke="#6e6e6e"/></svg>
</div>
</body></html>
